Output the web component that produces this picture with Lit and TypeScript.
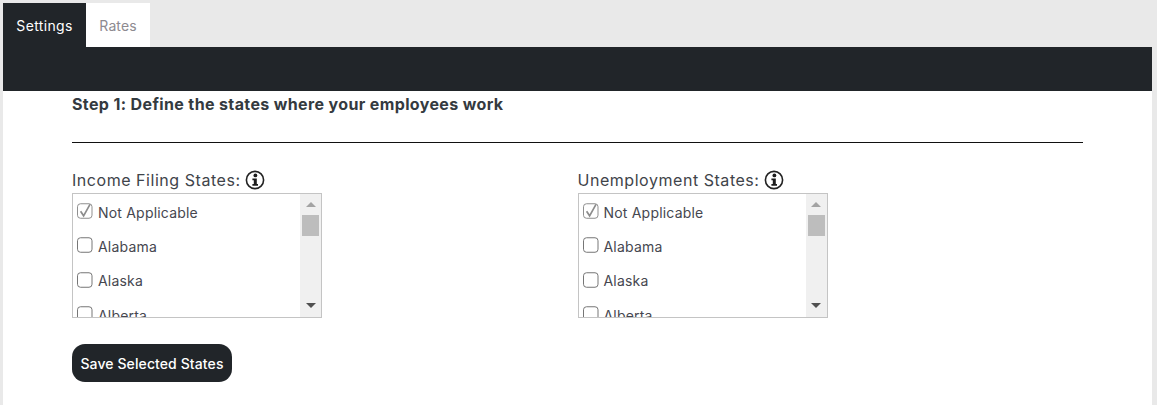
import { LitElement, html, css, svg } from "lit";
import { customElement } from "lit/decorators.js";

const STATES = ["Not Applicable", "Alabama", "Alaska", "Alberta"];

const box = (checked: boolean) => html`<svg class="cb" width="16" height="16" viewBox="0 0 16 16">
  <rect x="0.5" y="0.75" width="14.5" height="14.5" rx="3" fill="#fff" stroke="${checked ? "#8f8f8f" : "#767676"}" stroke-width="1"></rect>
  ${checked ? svg`<path d="M3.6 8.2 L6.6 12.8 L13 1.4" fill="none" stroke="#8c8c8c" stroke-width="1.7"></path>` : ""}
</svg>`;

const info = html`<svg class="info" width="20" height="20" viewBox="0 0 20 20">
  <circle cx="10" cy="10" r="8.6" fill="#fff" stroke="#222" stroke-width="1.6"></circle>
  <circle cx="10.4" cy="5.4" r="1.9" fill="#1c1c1c"></circle>
  <path d="M7.4 8.4 H11.8 V14 H13 V15.8 H7.4 V14 H8.8 V10.2 H7.4 Z" fill="#1c1c1c"></path>
</svg>`;

@customElement("app-root")
export class AppRoot extends LitElement {
  static styles = css`
    :host {
      display: block;
      height: 405px;
      overflow: hidden;
      background: #e9e9e9;
      padding: 3px 5px 0 3px;
      box-sizing: border-box;
      font-family: "Inter", "Liberation Sans", sans-serif;
      color: #343a40;
    }
    .tabs { display: flex; height: 44px; }
    .tab {
      display: flex;
      align-items: center;
      justify-content: center;
      font-size: 14px;
    }
    .tab.active { width: 83px; background: #212529; color: #fff; letter-spacing: 0.35px; }
    .tab.idle { width: 64px; background: #fff; color: #8d8a90; letter-spacing: 0.1px; }
    .bar { height: 44px; background: #212529; }
    .content {
      background: #fff;
      height: 314px;
      padding: 4px 69px 0 69px;
      box-sizing: border-box;
    }
    h2 {
      margin: 0;
      font-size: 16px;
      line-height: 18px;
      font-weight: 700;
      letter-spacing: 0.37px;
      color: #343a40;
    }
    hr {
      margin: 29px 0 0;
      border: 0;
      border-top: 1px solid #111;
    }
    .cols { display: flex; margin-top: 26px; }
    .col { width: 506px; }
    .label {
      display: flex;
      align-items: center;
      gap: 4px;
      height: 22px;
      font-size: 16px;
      letter-spacing: 0.54px;
      color: #3f444a;
    }
    .info { flex: none; }
    .list {
      margin-top: 2px;
      width: 250px;
      height: 125px;
      box-sizing: border-box;
      border: 1px solid #c4c4c4;
      display: flex;
      overflow: hidden;
    }
    .items { flex: 1; overflow: hidden; padding: 8px 0 0 4px; }
    .item {
      display: flex;
      align-items: center;
      gap: 5px;
      height: 20px;
      margin-bottom: 14.4px;
      font-size: 14px;
      letter-spacing: 0.2px;
      color: #46474f;
    }
    .cb { flex: none; position: relative; top: -1px; }
    .sb {
      flex: none;
      width: 21px;
      background: #f0f0f0;
      display: flex;
      flex-direction: column;
      align-items: center;
      position: relative;
    }
    .arrow { width: 0; height: 0; border-left: 5px solid transparent; border-right: 5px solid transparent; }
    .up { margin-top: 8px; border-bottom: 5px solid #a3a3a3; }
    .thumb { margin-top: 8px; width: 17px; height: 21px; background: #bdbdbd; }
    .down { margin-top: auto; margin-bottom: 9px; border-top: 5px solid #505050; }
    button {
      display: block;
      margin-top: 26px;
      width: 160px;
      height: 38px;
      border: 0;
      border-radius: 13px;
      background: #212529;
      color: #fff;
      font: 500 14px "Inter", "Liberation Sans", sans-serif;
      letter-spacing: 0.1px;
      padding: 0;
    }
  `;

  private renderCol(title: string) {
    return html`<div class="col">
      <div class="label"><span>${title}</span>${info}</div>
      <div class="list">
        <div class="items">
          ${STATES.map((s, i) => html`<div class="item">${box(i === 0)}<span>${s}</span></div>`)}
        </div>
        <div class="sb">
          <div class="arrow up"></div>
          <div class="thumb"></div>
          <div class="arrow down"></div>
        </div>
      </div>
    </div>`;
  }

  render() {
    return html`
      <div class="tabs">
        <div class="tab active">Settings</div>
        <div class="tab idle">Rates</div>
      </div>
      <div class="bar"></div>
      <div class="content">
        <h2>Step 1: Define the states where your employees work</h2>
        <hr />
        <div class="cols">
          ${this.renderCol("Income Filing States:")}
          ${this.renderCol("Unemployment States:")}
        </div>
        <button>Save Selected States</button>
      </div>
    `;
  }
}
